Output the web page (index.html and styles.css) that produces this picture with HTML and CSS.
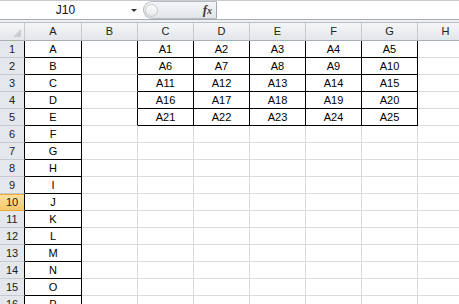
FILE: index.html
```html
<!DOCTYPE html>
<html lang="en">
<head>
  <meta charset="UTF-8" />
  <title>Book1 - Sheet1</title>
  <link rel="stylesheet" href="styles.css">
</head>
<body>
  <div class="formula-bar">
    <div class="name-box">
      <span class="name-value">J10</span>
      <span class="name-arrow"></span>
    </div>
    <div class="fx-area">
      <span class="grip"></span>
      <span class="fx">f<span class="fx-x">x</span></span>
    </div>
    <div class="formula-input"></div>
  </div>
  <div class="bar-gap"></div>

  <div class="sheet">
    <div class="hd corner"><span class="corner-mark"></span></div>
    <div class="hd">A</div><div class="hd">B</div><div class="hd">C</div><div class="hd">D</div>
    <div class="hd">E</div><div class="hd">F</div><div class="hd">G</div><div class="hd">H</div>

    <div class="rh">1</div><div class="bx">A</div><div class="bl"></div>
    <div class="bx">A1</div><div class="bx">A2</div><div class="bx">A3</div><div class="bx">A4</div><div class="bx">A5</div><div></div>

    <div class="rh">2</div><div class="bx">B</div><div class="bl"></div>
    <div class="bx">A6</div><div class="bx">A7</div><div class="bx">A8</div><div class="bx">A9</div><div class="bx">A10</div><div></div>

    <div class="rh">3</div><div class="bx">C</div><div class="bl"></div>
    <div class="bx">A11</div><div class="bx">A12</div><div class="bx">A13</div><div class="bx">A14</div><div class="bx">A15</div><div></div>

    <div class="rh">4</div><div class="bx">D</div><div class="bl"></div>
    <div class="bx">A16</div><div class="bx">A17</div><div class="bx">A18</div><div class="bx">A19</div><div class="bx">A20</div><div></div>

    <div class="rh">5</div><div class="bx">E</div><div class="bl"></div>
    <div class="bx">A21</div><div class="bx">A22</div><div class="bx">A23</div><div class="bx">A24</div><div class="bx">A25</div><div></div>

    <div class="rh">6</div><div class="bx">F</div><div></div><div></div><div></div><div></div><div></div><div></div><div></div>
    <div class="rh">7</div><div class="bx">G</div><div></div><div></div><div></div><div></div><div></div><div></div><div></div>
    <div class="rh">8</div><div class="bx">H</div><div></div><div></div><div></div><div></div><div></div><div></div><div></div>
    <div class="rh">9</div><div class="bx">I</div><div></div><div></div><div></div><div></div><div></div><div></div><div></div>
    <div class="rh sel">10</div><div class="bx">J</div><div></div><div></div><div></div><div></div><div></div><div></div><div></div>
    <div class="rh">11</div><div class="bx">K</div><div></div><div></div><div></div><div></div><div></div><div></div><div></div>
    <div class="rh">12</div><div class="bx">L</div><div></div><div></div><div></div><div></div><div></div><div></div><div></div>
    <div class="rh">13</div><div class="bx">M</div><div></div><div></div><div></div><div></div><div></div><div></div><div></div>
    <div class="rh">14</div><div class="bx">N</div><div></div><div></div><div></div><div></div><div></div><div></div><div></div>
    <div class="rh">15</div><div class="bx">O</div><div></div><div></div><div></div><div></div><div></div><div></div><div></div>
    <div class="rh">16</div><div class="bx">P</div><div></div><div></div><div></div><div></div><div></div><div></div><div></div>
  </div>
</body>
</html>
```

FILE: styles.css
```css
* {
  box-sizing: border-box;
}
body {
  margin: 0;
  width: 459px;
  height: 304px;
  overflow: hidden;
  font-family: "Liberation Sans", Arial, sans-serif;
  font-size: 11px;
  color: #000;
  background: #fff;
}

/* formula bar */
.formula-bar {
  display: flex;
  height: 20px;
  border-top: 1px solid #c8ccd1;
  border-bottom: 1px solid #a7adb5;
}
.name-box {
  width: 143px;
  display: flex;
  align-items: center;
}
.name-value {
  flex: 1;
  text-align: center;
  font-size: 12px;
  color: #111;
}
.name-arrow {
  width: 0;
  height: 0;
  border-left: 3px solid transparent;
  border-right: 3px solid transparent;
  border-top: 3px solid #333;
  margin-right: 6px;
}
.fx-area {
  width: 74px;
  display: flex;
  align-items: center;
  background: linear-gradient(#f4f5f7, #e2e5e9);
  border: 1px solid #b7bcc3;
  border-right-color: #a3a9b1;
  border-radius: 9px 0 0 9px;
}
.grip {
  width: 13px;
  height: 13px;
  margin-left: 1px;
  border-radius: 50%;
  border: 1px solid #c5c9cf;
  background: linear-gradient(#fdfdfd, #e4e6e9);
}
.fx {
  margin-left: auto;
  margin-right: 4px;
  font-family: "Liberation Serif", serif;
  font-style: italic;
  font-weight: bold;
  font-size: 13px;
  color: #3a3a3a;
}
.fx-x {
  font-size: 10px;
}
.formula-input {
  flex: 1;
  background: #fff;
}
.bar-gap {
  height: 3px;
  background: #eff0f2;
  border-bottom: 1px solid #b9bec5;
}

/* grid */
.sheet {
  display: grid;
  grid-template-columns: 25px 57px repeat(7, 56px);
  grid-template-rows: 18px;
  grid-auto-rows: 17px;
  width: max-content;
}
.sheet > div {
  border-right: 1px solid #dadcdd;
  border-bottom: 1px solid #dadcdd;
  text-align: center;
  line-height: 17px;
  white-space: nowrap;
  overflow: hidden;
}
.sheet > .hd {
  background: linear-gradient(#f5f6f8, #e3e6ea);
  border-right-color: #c5cad1;
  border-bottom-color: #a9afb7;
  color: #222;
  line-height: 17px;
}
.sheet > .corner {
  position: relative;
}
.corner-mark {
  position: absolute;
  right: 3px;
  bottom: 3px;
  border-left: 8px solid transparent;
  border-bottom: 8px solid #c9cdd3;
}
.sheet > .rh {
  background: #e4e7eb;
  border-bottom-color: #c5cad1;
  border-right-color: #000;
  color: #222;
}
.sheet > .sel {
  background: linear-gradient(#fbe2a4, #f5c865);
  border-bottom-color: #eaa93a;
  box-shadow: inset 0 1px #eaa93a;
}
.sheet > .bx {
  border-right-color: #000;
  border-bottom-color: #000;
}
.sheet > .bl {
  border-right-color: #000;
}
```
